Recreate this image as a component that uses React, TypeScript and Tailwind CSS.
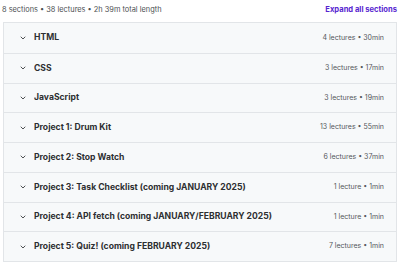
import React from "react";

const sections = [
  { title: "HTML", meta: "4 lectures • 30min" },
  { title: "CSS", meta: "3 lectures • 17min" },
  { title: "JavaScript", meta: "3 lectures • 19min" },
  { title: "Project 1: Drum Kit", meta: "13 lectures • 55min" },
  { title: "Project 2: Stop Watch", meta: "6 lectures • 37min" },
  { title: "Project 3: Task Checklist (coming JANUARY 2025)", meta: "1 lecture • 1min" },
  { title: "Project 4: API fetch (coming JANUARY/FEBRUARY 2025)", meta: "1 lecture • 1min" },
  { title: "Project 5: Quiz! (coming FEBRUARY 2025)", meta: "7 lectures • 1min" },
];

const Chevron = () => (
  <svg width="8" height="8" viewBox="0 0 24 24" fill="none" stroke="#2d2f31" strokeWidth="2.5" strokeLinecap="round" strokeLinejoin="round">
    <path d="M6 9l6 6 6-6" />
  </svg>
);

export default function App() {
  return (
    <div className="w-[400px] h-[263px] bg-white overflow-hidden font-['Inter',sans-serif] text-[#2d2f31]">
      <div className="flex items-center justify-between pl-[2px] pr-[3px] h-[19px]">
        <span className="text-[7.4px] text-[#4d5053]">8 sections • 38 lectures • 2h 39m total length</span>
        <span className="text-[7.6px] font-bold text-[#5624d0]">Expand all sections</span>
      </div>
      <div className="mx-[3px] mt-[3px] border border-[#e2e5e8]">
        {sections.map((s, i) => (
          <div
            key={s.title}
            className={`flex items-center h-[29.75px] bg-[#f7f9fa] pl-[15px] pr-[12px] ${i > 0 ? "border-t border-[#e2e5e8]" : ""}`}
          >
            <Chevron />
            <span className="ml-[7px] text-[8.6px] font-bold flex-1 truncate">{s.title}</span>
            <span className="text-[7px] text-[#54575a]">{s.meta}</span>
          </div>
        ))}
      </div>
    </div>
  );
}
